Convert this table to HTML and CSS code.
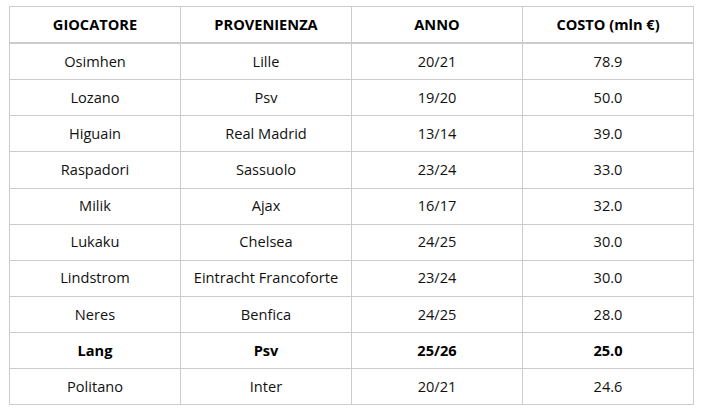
FILE: index.html
```html
<!DOCTYPE html>
<html lang="it">
<head>
<meta charset="utf-8">
<title>Acquisti</title>
<link rel="stylesheet" href="styles.css">
</head>
<body>
<table class="costs">
  <thead>
    <tr><th>GIOCATORE</th><th>PROVENIENZA</th><th>ANNO</th><th>COSTO (mln €)</th></tr>
  </thead>
  <tbody>
    <tr><td>Osimhen</td><td>Lille</td><td>20/21</td><td>78.9</td></tr>
    <tr><td>Lozano</td><td>Psv</td><td>19/20</td><td>50.0</td></tr>
    <tr><td>Higuain</td><td>Real Madrid</td><td>13/14</td><td>39.0</td></tr>
    <tr><td>Raspadori</td><td>Sassuolo</td><td>23/24</td><td>33.0</td></tr>
    <tr><td>Milik</td><td>Ajax</td><td>16/17</td><td>32.0</td></tr>
    <tr><td>Lukaku</td><td>Chelsea</td><td>24/25</td><td>30.0</td></tr>
    <tr><td>Lindstrom</td><td>Eintracht Francoforte</td><td>23/24</td><td>30.0</td></tr>
    <tr><td>Neres</td><td>Benfica</td><td>24/25</td><td>28.0</td></tr>
    <tr class="hl"><td>Lang</td><td>Psv</td><td>25/26</td><td>25.0</td></tr>
    <tr><td>Politano</td><td>Inter</td><td>20/21</td><td>24.6</td></tr>
  </tbody>
</table>
</body>
</html>
```

FILE: styles.css
```css
html, body {
  margin: 0;
  background: #fff;
}
body {
  padding: 6px 0 0 9px;
  font-family: "Open Sans", "Noto Sans", sans-serif;
  font-size: 14.6px;
  color: #111;
}
.costs {
  border-collapse: collapse;
  width: 685px;
  table-layout: fixed;
}
.costs th,
.costs td {
  border: 1px solid #cccccc;
  text-align: center;
  padding: 0 4px 2px;
  height: 33.15px;
  line-height: 20px;
}
.costs th {
  font-weight: 700;
  color: #000;
  border-bottom: 2px solid #cccccc;
  height: 33px;
}
.costs tr.hl td {
  font-weight: 700;
  color: #000;
}
```
